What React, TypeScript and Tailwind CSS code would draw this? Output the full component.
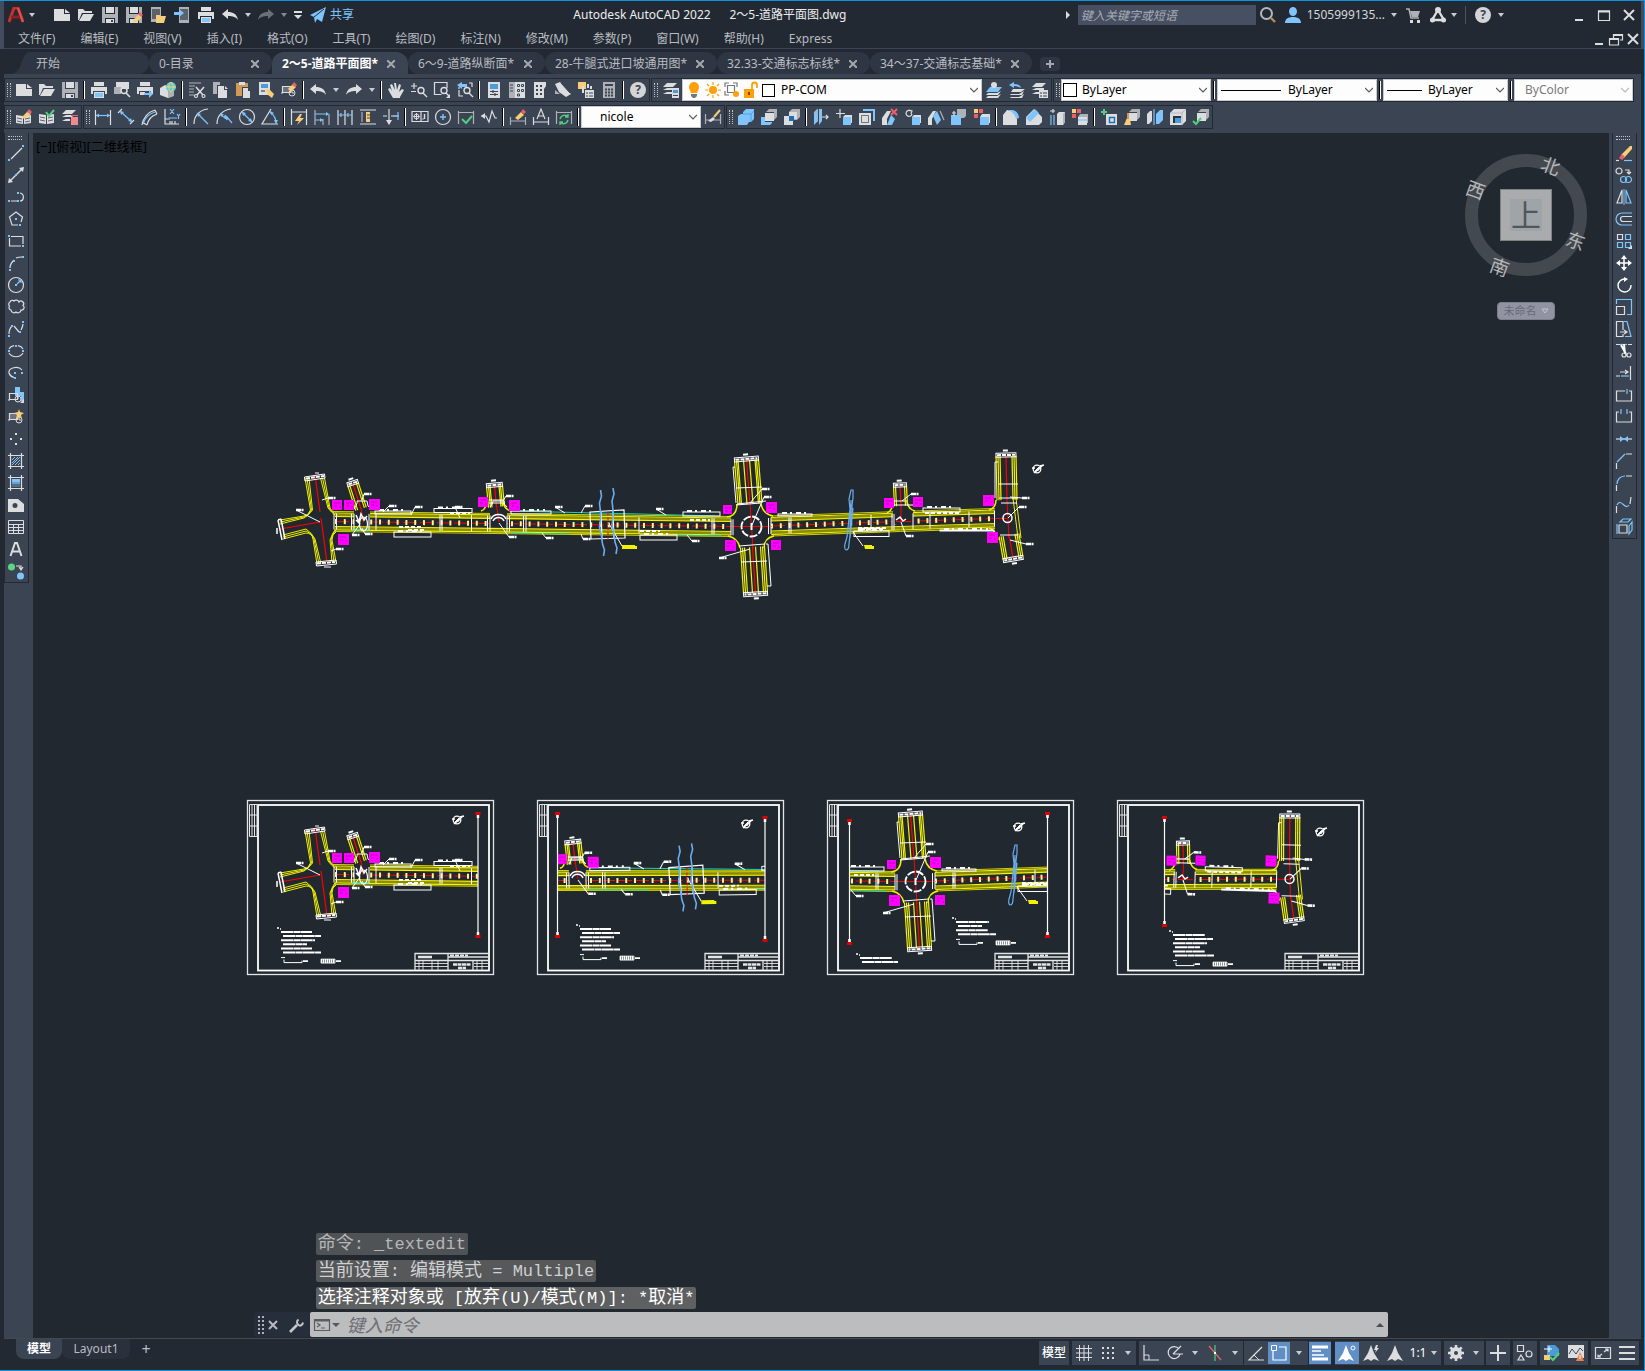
import React from 'react';

const W = '#dcdddf';
const S = '#aeb1b5';
const B = '#7fc4fb';
const Y = '#f7cd79';
const R = '#ec6066';
const G = '#4fcf80';
const D = '#3b4453';

// [kind, path, colour, stroke width]; 'f' fills the path and 's' strokes it
type Shape = [string, string, string?, number?];

const PENCIL: Shape[] = [
  ['f', 'M7 16l1-4 5-5 3 3-5 5z', Y],
  ['f', 'M12 7l2-2 3 3-2 2z', R],
];
const PRINTER: Shape[] = [
  ['f', 'M3 0h10v4H3z'],
  ['f', 'M0 5h16v7h-2V9H2v3H0z'],
];
const DISK: Shape[] = [
  ['f', 'M0 0h3v7h10V0h3v16h-3v-5H3v5H0z', S],
  ['f', 'M4 0h8v6H4zM4 12h8v4H4z'],
  ['f', 'M9 13h2v2H9z', D],
];
const CUBE: Shape[] = [
  ['f', 'M5 3l3-3h8v8l-3 3V3z', S],
  ['f', 'M4 4h9v8H4z'],
];
const BLOCK: Shape[] = [
  ['f', 'M1 4h9v7H1z', '#6b7380'],
  ['s', 'M1.5 4.5h8v6h-8zM0 11h2'],
  ['s', 'M8 11a3 3 0 1 0 6 0a3 3 0 1 0-6 0M11 11V8M11 11h2', W, 1],
];
const DIM: Shape[] = [['s', 'M.5 2v13M15.5 2v13M0 3.500h16', S]];
const ARROW_A: Shape[] = [['f', 'M8 0l3 8 5 8-5-2-3 2-3-2-5 2 5-8z']];

const shapes: Record<string, Shape[]> = {
  new: [['f', 'M0 2h10v5h6v7H0z'], ['f', 'M11 2l5 4h-5z']],
  open: [['f', 'M0 13V2h5l2 2h7v2H4L1 13z'], ['f', 'M5 7h11l-4 7H1z']],
  save: DISK,
  saveAs: [...DISK, ...PENCIL],
  openMobile: [['f', 'M1 0h10v15H1z', S], ['f', 'M2 2h8v10H2z', '#5c6269'], ['f', 'M6 8h4l1 1h5l-2 7H6z', Y]],
  saveMobile: [['f', 'M5 0h10v16H5z', S], ['f', 'M6 2h8v11H6z', '#5c6269'], ['f', 'M0 5h5V2l5 4-5 4V8H0z', B]],
  print: [...PRINTER, ['f', 'M3 10h10v6H3z'], ['f', 'M4 11h8v4H4z', B]],
  undo: [['f', 'M0 7l6-5v3c5 0 9 2 10 8-2-3-5-4-10-4v3z']],
  redo: [['f', 'M16 7l-6-5v3C5 5 1 7 0 13c2-3 5-4 10-4v3z']],
  customize: [['f', 'M4 4h8v2H4zM4 8h8l-4 4z']],
  share: [['f', 'M0 8L16 0l-4 15-5-3-2 4-1-6z', B], ['s', 'M4 10l10-8', '#222933', 1]],
  preview: [['f', 'M2 0h13v7H2z'], ['f', 'M0 5h7v7H0z', S], ['s', 'M7 8.500a3 3 0 1 0 6 0a3 3 0 1 0-6 0M12 11l4 4', W, 1.6]],
  publish: [...PRINTER, ['f', 'M3 10h5v3H3z'], ['f', 'M7 11h5V8l4 4-4 4v-3H7z', B]],
  globe: [['f', 'M0 6l5-3 8 3v8l-5 2-8-3z'], ['f', 'M8 9l6-3v8l-6 2z', S], ['f', 'M6 5a5 5 0 1 0 10 0a5 5 0 1 0-10 0', '#5ed0cc'], ['s', 'M6 5h10M11 0c-3 3-3 7 0 10M11 0c3 3 3 7 0 10', Y, 1]],
  cut: [['s', 'M0 1h12M0 4h6M0 7h5M0 10h5M0 13h5', S], ['s', 'M7 5l7 8M15 5l-7 8', W, 1.6], ['s', 'M5.500 14a1.500 1.500 0 1 0 3 0a1.500 1.500 0 1 0-3 0M13 14a1.500 1.500 0 1 0 3 0a1.500 1.500 0 1 0-3 0']],
  copy: [['f', 'M1 0h7v3H5v9H1z', S], ['f', 'M6 4h6v4h3v8H6z'], ['f', 'M13 4l3 3h-3z']],
  paste: [['f', 'M1 1h12v4H7v9H1z', '#cf9a58'], ['f', 'M4 0h6v3H4z'], ['f', 'M8 6h5v3h2v7H8z']],
  matchProp: [['f', 'M1 0h11v13H1z'], ['f', 'M3 2h7v4H3z', '#4b9bd8'], ['s', 'M3 9h4', D], ['f', 'M8 8l3-1 5 5-2 4-4-3z', Y]],
  blockEdit: [...BLOCK, ['f', 'M7 7l5-5 3 3-5 5z', Y], ['f', 'M11 3l2-3 3 3-2 2z', R]],
  pan: [['f', 'M5 16L2 11 0 7l2-1 2 3L2 3l2-1 3 6-1-7h2l1 7 2-6 2 1-2 7 3-3 2 1-4 7v1z']],
  zoom: [['s', 'M0 4h6M3 1v6M0 9.500h5'], ['s', 'M7 8.500a3 3 0 1 0 6 0a3 3 0 1 0-6 0M12 11l4 4', W, 1.4]],
  zoomWin: [['s', 'M13 6V.5H.5v12h7'], ['s', 'M7 8.500a3 3 0 1 0 6 0a3 3 0 1 0-6 0M12 11l3 3', W, 1.4], ['f', 'M12 16h4v-4z']],
  zoomPrev: [['s', 'M2 8v6h4M12 1h3v4M2 5v2'], ['f', 'M0 3l5-3v2h5v3H5v2z', B], ['s', 'M7 8.500a3 3 0 1 0 6 0a3 3 0 1 0-6 0M12 11l4 4', W, 1.4]],
  props: [['f', 'M2 0h12v16H2z'], ['f', 'M4 2h8v5H4z', '#4b9bd8'], ['s', 'M4 9.500h8M4 12.500h8M7 8v3M9 11v3', D]],
  designCenter: [['f', 'M0 0h6v16H0z', S], ['f', 'M6 0h10v16H6z'], ['s', 'M1 3h3M1 6h3M1 9h3', D], ['s', 'M8.500 2.500h2v2h-2zM12.500 2.500h2v2h-2zM8.500 7.500h2v2h-2zM12.500 7.500h2v2h-2zM8.500 12h2v2h-2z', D, 1]],
  palettes: [['f', 'M2 0h12v4l-2 3v9H2z'], ['s', 'M4 4h2M8 4h2M4 8h2M8 8h2M4 12h2M8 12h2', D, 2]],
  sheetSet: [['f', 'M0 2l5-2 11 12-5 3-7-5z'], ['s', 'M6 1l9 10', D, 1], ['f', 'M0 8l5 4H0z', S]],
  markup: [['f', 'M0 0h8v7H0z', Y], ['s', 'M5 4v7M10 2v4M13 4v3', W, 2], ['f', 'M7 8h9v8H7z'], ['s', 'M8 11h2M11 11h4M8 14h2M11 14h4', D, 1]],
  calc: [['f', 'M2 0h12v16H2z', S], ['f', 'M4 2h8v2H4z', D], ['s', 'M4 7.500h8M4 10.500h8M4 13.500h8', D, 2], ['s', 'M6.500 6v9M9.500 6v9', S, 1]],
  layers: [['f', 'M4 1h10l-4 4H0zM4 6h6v2H0zM4 10h5v2H0z'], ['f', 'M9 6h7v10H9z'], ['f', 'M10 8h5v3h-5z', '#4b9bd8'], ['s', 'M10 13.500h5', D, 1]],
  layerCurrent: [['f', 'M4 5h12l-4 5H0z', B], ['f', 'M5 3a3 3 0 1 0 6 0a3 3 0 1 0-6 0'], ['f', 'M2 11h9l4-2-3 4H0zM2 14h9l4-2-3 4H0z']],
  layerPrev: [['f', 'M4 7h12l-4 3H2zM2 12h8l5-3-2 4H1zM2 15h8l5-3-2 4H1z'], ['f', 'M0 3l5-3v2c4 0 6 1 7 4-2-1-4-2-7-2v2z', B]],
  layerStates: [['f', 'M4 1h10l-4 4H0zM4 6h8v2H0zM4 10h4v2H0z'], ['f', 'M7 8h9v8H7z'], ['s', 'M8 11h2M11 11h4M8 14h2M11 14h4', D, 1]],
  bookEdit: [['f', 'M0 6l7 1v8l-7-1zM15 6l-7 1v8l7-1z'], ['s', 'M1 9l5 1M1 12l5 1M9 10l5-1M9 13l5-1', D, .8], ['f', 'M6 8l6-6 3 3-7 5z', Y], ['f', 'M11 3l2-3 3 3-2 2z', R]],
  bookCheck: [['f', 'M0 5l7 1v9l-7-1zM15 5l-7 1v9l7-1z'], ['s', 'M1 8l5 1M1 11l5 1M9 9l5-1M9 12l5-1', D, .8], ['s', 'M7 3l3 4 5-6', G, 2]],
  layerDelete: [['f', 'M4 1h10l-4 4H0zM4 6h8l-2 2H0zM4 10h4v2H0z'], ['f', 'M9 8h7v8H9z', '#f08a90'], ['f', 'M9 6h7v1H9z', R]],
  dimLinear: [['s', 'M.5 1v15M15.500 1v15'], ['s', 'M1 6.500h14', B], ['f', 'M1 6.500l3-2v4zM15 6.500l-3-2v4z', B]],
  dimAligned: [['s', 'M0 4l4-4M12 15l4-4'], ['s', 'M2 2l12 11', B], ['f', 'M2 2l4 1-3 3zM14 13l-4-1 3-3z', B]],
  dimArc: [['s', 'M1 16C2 9 7 3 14 1M14 1l2 4M1 13l5 3'], ['s', 'M6 16C7 11 10 7 16 5', W], ['s', 'M2 15C4 8 8 5 14 3', B]],
  dimOrdinate: [['s', 'M1 0v15h14M6 15v-3M11 15v-3'], ['s', 'M5 11V9h8M6 0l4 5M10 0L6 5M13 5l1.500 2L16 5M14.500 7v3', B], ['s', 'M1 10h3M8 12v3', W]],
  dimRadius: [['s', 'M1 15C1 7 6 1 15 0'], ['s', 'M4 4l11 11', B], ['f', 'M4 4l4 1-3 3z', B]],
  dimJogged: [['s', 'M1 15C1 7 6 1 15 0'], ['s', 'M4 5l5 4 0-3 2 5V8l5 6', B], ['f', 'M4 5l4 0-3 3z', B]],
  dimDiameter: [['s', 'M.5 8a7.500 7.500 0 1 0 15 0a7.500 7.500 0 1 0-15 0'], ['s', 'M3 3l10 10', B], ['f', 'M3 3l4 1-3 3zM13 13l-4-1 3-3z', B]],
  dimAngular: [['s', 'M9 0L0 15h16'], ['s', 'M8 3c4 3 6 6 6 11', B], ['f', 'M8 2l4 2-3 2zM14 15l-2-4h4z', B]],
  quickDim: [['s', 'M.5 0v16M15.500 0v16M1 3h14'], ['f', 'M9 5L4 12h4l-2 4 7-7H9l2-4z', Y]],
  dimBaseline: [['s', 'M1 1v15M9 10v6M15 5v11', S], ['s', 'M1 5h13M1 11h8', B], ['f', 'M15 5l-3-2v4zM9 11l-3-2v4z', B]],
  dimContinue: [['s', 'M1 1v15M8 1v15M15 1v15'], ['s', 'M1 6h14M4 4v4M11 4v4', B]],
  dimSpace: [['s', 'M0 1h16M0 15h16'], ['f', 'M6 3h4v10H6z', Y], ['s', 'M2 3v10', S], ['s', 'M7 6h3M7 9h3', D, 1]],
  dimBreak: [['s', 'M6 0v15M0 7h4M8 7h8'], ['f', 'M3 11h6l-3 5z'], ['s', 'M10 7h5M15 3v8', B]],
  tolerance: [['s', 'M0 2.500h16v10H0zM9 2v10'], ['s', 'M2 7.500a2.500 2.500 0 1 0 5 0a2.500 2.500 0 1 0-5 0M4.500 4v7M1.500 7.500h6', W, 1], ['s', 'M12.500 5v5M10.500 10h1', W, 1.4]],
  centerMark: [['s', 'M.5 8a7.500 7.500 0 1 0 15 0a7.500 7.500 0 1 0-15 0'], ['s', 'M5 8h6M8 5v6', B, 1.4]],
  inspect: [...DIM, ['s', 'M4 10l4 4 6-7', G, 2]],
  jogLine: [['s', 'M0 7h5l3 6 3-11 3 7h2'], ['f', 'M0 7l4-3v6z']],
  dimEdit: [['s', 'M.5 8v8M15.500 8v8M0 12h16', S], ['f', 'M5 9l6-6 3 3-6 5z', Y], ['f', 'M11 3l2-3 3 3-2 2z', R]],
  dimTextEdit: [['s', 'M.5 8v8M15.500 8v8M0 13h16M4 10L8 0l4 10M5 7h6']],
  dimUpdate: [...DIM, ['s', 'M4 10c1-4 6-5 8-2M12 5v3h-3M12 11c-1 4-6 5-8 2M4 16v-3h3', G, 1.4]],
  dimStyle: [['s', 'M.5 5v10M15.500 5v10M0 11h16', S], ['f', 'M3 12l5-4 2 2-4 3z'], ['s', 'M9 8l6-7', Y, 2]],
  union: [['f', 'M0 7l3-2h2V3l3-3h8v10l-3 3h-2l-2 3H0z', B], ['s', 'M5 5h8l3-3M13 5v8', '#4b9bd8', .8]],
  subtract: [['f', 'M0 8h4v5h7v1l-2 2H0z', B], ...CUBE],
  intersect: [['f', 'M5 3l3-3h8v8l-3 3h-3z', S], ['f', 'M5 3h8v7H5z'], ['f', 'M0 7h9v9H0z'], ['f', 'M5 7h5v5H5z', '#1b6fb3']],
  extrudeFaces: [['f', 'M1 4l4-4v12l-4 4zM6 0h3v12l-3 4z', B], ['s', 'M1 4l3-3v12', S], ['s', 'M9 8h6M13 6l2 2-2 2']],
  moveFaces: [['s', 'M4 0v9M0 4.500h9'], ['f', 'M7 8h8v8H7z', B], ['f', 'M7 8l2-2h7v8h-1V8z']],
  offsetFaces: [['f', 'M4 0h12v12h-2V2H4z', B], ['f', 'M0 4h12v12H0z'], ['s', 'M2.500 6.500h7v7h-7z', '#6b7380', 1]],
  deleteFaces: [['f', 'M0 16V9l5-7h4L5 10v6z'], ['f', 'M5 16l4-10 4 4-3 6z', B], ['s', 'M9 0l6 6M15 0L9 6', R, 2]],
  rotateFaces: [['s', 'M6 2a3 3 0 1 0 1 3M4 1l3 1-1 3'], ['f', 'M7 8h8v8H7z', B], ['f', 'M7 8l2-2h7v8h-1V8z']],
  taperFaces: [['f', 'M0 16V9l5-7h3L4 10v6z'], ['f', 'M5 7l4-5 4 9-4 5z', B], ['s', 'M12 2l4 9', S]],
  copyFaces: [['f', 'M6 0h9v7l-2 2H6z', S], ['f', 'M0 6h10v10H0z', B], ['s', 'M1 4h4M3 2v5']],
  colorFaces: [['f', 'M0 0h4v4H0z', Y], ['f', 'M5 0h4v4H5z', R], ['f', 'M0 5h4v4H0z', R], ['f', 'M6 8h9v8H6z', B], ['f', 'M6 8l2-3h8v9h-1V8z']],
  filletEdge: [['f', 'M0 16V6l4-5 5 1c4 2 5 5 5 8v6z'], ['f', 'M5 1h5c4 1 6 5 6 8l-3 1C12 6 10 3 5 1z', B]],
  chamferEdge: [['f', 'M0 16V8l8-8 8 8v5l-3 3z'], ['f', 'M0 9l9-9 4 4-9 9z', B]],
  copyEdges: [['s', 'M1 2h5M4 0v4'], ['s', 'M2 6v10M5 6v10', B], ['f', 'M8 5l2-2h6v10l-2 3H8z'], ['f', 'M14 5l2-2v10l-2 3z', S]],
  colorEdges: [['f', 'M0 0h4v4H0z', Y], ['f', 'M5 0h4v4H5z', R], ['f', 'M0 5h4v4H0z', R], ['f', 'M6 8h9v8H6z'], ['f', 'M6 8l2-3h8v9h-1V8z', S], ['s', 'M6 11h9', B]],
  imprint: [['s', 'M0 3h6M3 0v6', G, 2], ['f', 'M5 5h11v11H5z'], ['s', 'M8.500 8.500h5v5h-5z', '#1b6fb3', 1.4]],
  clean: [...CUBE, ['f', 'M3 9l3 1 1 6H0z', Y], ['s', 'M4 4v6', '#cf9a58', 2]],
  separate: [['f', 'M0 5l3-3h2v10l-3 3H0z'], ['f', 'M9 5l4-4h3v10l-4 4H9z', B], ['s', 'M7 0v16', B]],
  shell: [['f', 'M0 4l4-4h12v12l-4 4H0z'], ['f', 'M3 7h8v7H3z', '#2b3340'], ['f', 'M5 9h6v5H5z', '#4b9bd8'], ['s', 'M0 4h12v12M12 4l4-4', S, .8]],
  check: [...CUBE, ['s', 'M0 12l3 3 5-6', G, 2]],

  line: [['s', 'M3 14L14 3'], ['f', 'M0 14h2v2H0zM14 0h2v2h-2z', B]],
  xline: [['s', 'M2 14L14 2', W, 1.4], ['f', 'M0 16l1-5 4 4zM16 0l-5 1 4 4z'], ['f', 'M7 7h2v2H7z', B]],
  pline: [['s', 'M3 12h6M12 4c5 1 4 8 0 8'], ['f', 'M0 11h2v2H0zM9 11h2v2H9zM9 3h2v2H9z', B]],
  polygon: [['s', 'M10 14H4L1.500 6 8 1l6.500 5-1.500 5'], ['f', 'M7 7h2v2H7zM11 13h2v2h-2z', B]],
  rect: [['s', 'M3 3.500h12V11M1.500 5v8H13'], ['f', 'M0 2h2v2H0zM14 12h2v2h-2z', B]],
  arc: [['s', 'M2 13c0-3 2-6 4-8M8 3c2-1 4-1 6-1'], ['f', 'M1 14h2v2H1zM5 5h2v2H5zM14 1h2v2h-2z', B]],
  circle: [['s', 'M.5 8a7.500 7.500 0 1 0 15 0a7.500 7.500 0 1 0-15 0'], ['s', 'M9 7l4-4M10 3h3v3', B], ['f', 'M7 7h2v2H7z', B]],
  revcloud: [['s', 'M1.500 7A2.500 2.500 0 0 1 2 3a2.500 2.500 0 0 1 4-1a3 3 0 0 1 5 1a2.500 2.500 0 0 1 4 3.500a2.500 2.500 0 0 1-2 4.500a3 3 0 0 1-5 2a3 3 0 0 1-5-2a2.500 2.500 0 0 1-1.500-4z']],
  spline: [['s', 'M1 13c0-3 1-6 3-8M6 5l5 6M13 9c1-2 2-4 2-6'], ['f', 'M0 14h2v2H0zM3 4h2v2H3zM11 10h2v2h-2zM14 0h2v2h-2z', B]],
  ellipse: [['s', 'M1 6c1-2 3-3 5-3.300M10 2.700c2 .3 4 1.300 5 3.300M1 10c3 5 11 5 14 0'], ['f', 'M0 7h2v2H0zM14 7h2v2h-2zM7 2h2v2H7z', B]],
  ellipseArc: [['s', 'M14 5C10 0 0 3 1 8c1 3 3 4 5 4.500'], ['f', 'M6 7h2v2H6zM13 7h2v2h-2zM6 12h2v2H6z', B]],
  insertBlock: [['f', 'M7 0h5v5h4v9h-3V9H7z', B], ['s', 'M1.500 6.500h8v6h-8zM0 13h2'], ['s', 'M7 12a3 3 0 1 0 6 0a3 3 0 1 0-6 0M10 12V9', W, 1], ['f', 'M12 16h4v-4z']],
  makeBlock: [...BLOCK, ['f', 'M11 0l1 3 4 1-3 2 1 4-3-2-3 2 1-4-3-2 4-1z', Y]],
  point: [['f', 'M7 2h2v2H7zM2 7h2v2H2zM12 7h2v2h-2zM7 12h2v2H7z']],
  hatch: [['s', 'M2.500 0v16M13.500 0v16M0 2.500h16M0 13.500h16'], ['s', 'M4 7l3-3M4 10l6-6M4 12l8-8M7 12l5-5M10 12l2-2', B, 1]],
  gradient: [['s', 'M2.500 0v16M13.500 0v16M0 2.500h16M0 13.500h16'], ['f', 'M4 4h8v3H4z', B], ['f', 'M4 7h8v2H4z', '#6a9fc8'], ['f', 'M4 9h8v3H4z', '#566f88']],
  region: [['f', 'M0 2h10l6 5v8H0zM7 6a2.500 2.500 0 1 0 0 5a2.500 2.500 0 1 0 0-5z']],
  table: [['s', 'M.5 1.500h15v13H.5zM0 5.500h16M0 8.500h16M0 11.500h16M5.500 5v9M10.500 5v9', W, 1]],
  mtext: [['s', 'M2.500 15L7 2h2l4.500 13M4 10.500h8', W, 2]],
  addSelected: [['f', 'M0 4a3.500 3.500 0 1 0 7 0a3.500 3.500 0 1 0-7 0', '#5bd687'], ['f', 'M9 13a3.500 3.500 0 1 0 7 0a3.500 3.500 0 1 0-7 0', B], ['s', 'M8 3h5v3M11 4l2 3 2-3']],

  erase: [['f', 'M5 10L14 1l2 0v3l-8 9z', Y], ['f', 'M3 13l3-4 3 3-3 3z', R], ['s', 'M0 15.500h3'], ['s', 'M8 15.500h8', B]],
  copyObj: [['s', 'M0 4a3 3 0 1 0 6 0a3 3 0 1 0-6 0M9 3h4v4M11 5l2 2 2-2'], ['s', 'M4.500 12.500a3 3 0 1 0 6 0a3 3 0 1 0-6 0M9.500 12.500a3 3 0 1 0 6 0a3 3 0 1 0-6 0', B]],
  mirror: [['s', 'M6 1v13H1z'], ['s', 'M10 1v13h5z', B], ['s', 'M8 0v16', B, 1]],
  offset: [['s', 'M16 2H6a6 6 0 0 0 0 12h10', B], ['s', 'M16 5.500H7a2.500 2.500 0 0 0 0 5h9']],
  array: [['s', 'M1.500 1.500h5v5h-5z'], ['s', 'M9.500 1.500h5v5h-5zM1.500 9.500h5v5h-5zM9.500 9.500h5v5h-5z', B], ['f', 'M12 16h4v-4z']],
  move: [['s', 'M8 2v12M2 8h12', '#fff', 1.5], ['f', 'M8 0l3 4H5zM8 16l3-4H5zM0 8l4-3v6zM16 8l-4-3v6z', '#fff']],
  rotate: [['s', 'M9 2a6.500 6.500 0 1 0 6 6', '#fff', 1.4], ['f', 'M8 0l4 2-4 3z', '#fff']],
  scale: [['s', 'M.5 5V.5h15v15H11', B], ['s', 'M.5 7.500h8v8h-8z']],
  stretch: [['s', 'M7 9V.5H.5v15H7V13M4 11h6M8 9l3 2-3 2'], ['s', 'M8 .5h3l4 15H9', B]],
  trim: [['s', 'M0 1.500h4M12 1.500h4'], ['s', 'M4 1.500h7', B], ['s', 'M5 2l5 9M8 1l1 10', '#fff', 2], ['s', 'M6 12a2 2 0 1 0 4 0a2 2 0 1 0-4 0M11 12a2 2 0 1 0 4 0a2 2 0 1 0-4 0']],
  extend: [['s', 'M14.500 1v14M0 11h4M4 7h8M9 5l3 2-3 2'], ['s', 'M5 11h8', B]],
  breakPoint: [['s', 'M9 4H.5v10h15V4H13'], ['s', 'M11 2v5', B]],
  breakObj: [['s', 'M3 3H.5v10h15V3H13'], ['s', 'M5 0v5M11 0v5', B]],
  join: [['s', 'M0 8h16'], ['f', 'M4 5l4 3-4 3zM12 5L8 8l4 3z', B]],
  chamfer: [['s', 'M10 1h6M.5 10v6'], ['s', 'M1 9l8-8', B]],
  fillet: [['s', 'M10 1h6M.5 10v6'], ['s', 'M1 9c0-4 3-8 8-8', B]],
  blend: [['s', 'M.5 9v7M15 0l-1 7'], ['s', 'M1 8c4-8 8 6 12 0', B]],
  explode: [['s', 'M3 6h8v8H3z'], ['s', 'M1 5v10M4 3l3-3h8l-3 3zM13 7l3-4v8l-3 4z', B]],

  grid: [['s', 'M3.500 0v16M8 0v16M12.500 0v16M0 3.500h16M0 8h16M0 12.500h16', W, 1]],
  snap: [['f', 'M2 2h2v2H2zM7 2h2v2H7zM12 2h2v2h-2zM2 7h2v2H2zM7 7h2v2H7zM12 7h2v2h-2zM2 12h2v2H2zM7 12h2v2H7zM12 12h2v2h-2z']],
  ortho: [['s', 'M1 0v15h15'], ['s', 'M1 10h5v5', W, 1]],
  polar: [['s', 'M12 4a6 6 0 1 0 1 5M6 9h10M6 9l8-8']],
  isoplane: [['s', 'M2 1l12 14', R], ['s', 'M8 0v16', G], ['f', 'M7 7h2v2H7z', '#fff']],
  otrack: [['s', 'M14 2L1 15h15'], ['s', 'M6 10l5 5', W, 1]],
  osnap: [['s', 'M2 6v9h13V2H8', '#fff'], ['s', 'M.5.5h5v5h-5z', '#fff', 1]],
  lineweight: [['s', 'M0 2h16M0 14h16', '#fff', 3], ['s', 'M0 6h9M0 10h12', '#fff', 1.6]],
  annoVis: [['f', 'M7 0l3 8 5 8-5-2-3 2-3-2-5 2 5-8z', '#fff'], ['s', 'M12 3a2 2 0 1 0 4 0a2 2 0 1 0-4 0', '#fff', 1]],
  annoAuto: [...ARROW_A, ['f', 'M13 0l-2 5h2l-1 3 4-5h-2l1-3z']],
  annoScale: ARROW_A,
  plus: [['s', 'M0 8h16M8 0v16', W, 2]],
  isolate: [['s', 'M.5.5h6v6h-6zM4 10l3 5H1zM9 9a3 3 0 1 0 6 0a3 3 0 1 0-6 0', W, 1.200]],
  hardware: [['f', 'M3 0h8l4 4v7H3z', '#4b9bd8'], ['s', 'M0 4h8M5 1v6', '#fff', 1], ['f', 'M0 10h6v5H0z', Y], ['s', 'M6 12l3 3 6-7', G, 2.200]],
  perf: [['f', 'M0 0h16v13H0z'], ['s', 'M1 9l3-5 4 5 4-6 3 3', D, 1], ['f', 'M12 7l4 9H8z', '#e8824a'], ['s', 'M12 10v4', '#fff', 1]],
  fullscreen: [['s', 'M.5 2.500h15v11H.5z'], ['s', 'M9 7l4-3M10 4h3v2.500M7 9l-4 3M3 9.500V12h3', W, 1.2]],
  menu: [['s', 'M0 2h16M0 8h16M0 14h16', W, 2]],
  search: [['s', 'M1 6.500a5.500 5.500 0 1 0 11 0a5.500 5.500 0 1 0-11 0', '#b5b8bb', 2], ['s', 'M11 11l4 4', '#b58b5a', 2.4]],
  user: [['f', 'M4 4.500a4 4.500 0 1 0 8 0a4 4.500 0 1 0-8 0M0 16c0-4 3-6 8-6s8 2 8 6z', B]],
  cart: [['s', 'M0 2h3l2 9h8', S, 1.6], ['f', 'M4 4h10l-2 6H6z', S], ['f', 'M4 13h3v3H4zM11 13h3v3h-3z', W]],
  autodesk: [['s', 'M8 3L2 13h12z', W, 2.4], ['f', 'M5 3a3 3 0 1 0 6 0a3 3 0 1 0-6 0M0 13a2.500 2.500 0 1 0 5 0a2.500 2.500 0 1 0-5 0M11 13a2.500 2.500 0 1 0 5 0a2.500 2.500 0 1 0-5 0']],
  minimize: [['s', 'M4 13h8', W, 2]],
  maximize: [['s', 'M2.500 4h11v9.500h-11z', W, 1.2], ['s', 'M2 4.500h12', W, 2]],
  restore: [['s', 'M5.500 7V3.500h9V9H12M1.500 8h9v6h-9z', W, 1.2], ['s', 'M1 8h10M5 4h10', W, 1.8]],
  close: [['s', 'M3 3l10 10M13 3L3 13', W, 2]],
  closePanel: [['s', 'M4 4l8 8M12 4l-8 8', '#b9bbbe', 2]],
  wrench: [['s', 'M2 15l7-7', '#c4c6c9', 2.600], ['s', 'M10.500 2.500c-2 1.500-2 4 0 5.500s4 0 4.500-2.500', '#c4c6c9', 2]],
  prompt: [['s', 'M.5 2.500h15v11H.5z', '#5a5c5f', 1.200], ['s', 'M0 3.500h16', '#5a5c5f', 2], ['s', 'M3 6l3 2-3 2M7 11h4', '#5a5c5f', 1.2]],
  gear: [['s', 'M8 0v16M0 8h16M2.300 2.300l11.400 11.400M13.700 2.300L2.300 13.700', W, 2.6], ['s', 'M3.500 8a4.500 4.500 0 1 0 9 0a4.500 4.500 0 1 0-9 0', W, 3], ['f', 'M6 8a2 2 0 1 0 4 0a2 2 0 1 0-4 0', D]],
  bulb: [['f', 'M3 5a5 5 0 1 1 10 0c0 3-2 4-2 6H5c0-2-2-3-2-6z', '#ff9f0a'], ['f', 'M5 12h6v2l-2 2H7l-2-2z', '#777']],
  sun: [['f', 'M4 8a4 4 0 1 0 8 0a4 4 0 1 0-8 0', '#ff9f0a'], ['s', 'M8 0v3M8 13v3M0 8h3M13 8h3M2 2l2 2M12 12l2 2M14 2l-2 2M4 12l-2 2', '#ff9f0a', 1.2]],
  vpFreeze: [['s', 'M1 5V1h4M9 1h4v4M1 9v4h4M3.500 3.500h7v7h-7z', '#777', 1.2], ['f', 'M9 12a3 3 0 1 0 6 0a3 3 0 1 0-6 0', '#ff9f0a']],
  lock: [['f', 'M1 7h10v9H1z', '#ff9f0a'], ['s', 'M9 7V3a2.500 2.500 0 0 1 5 0v3', '#ff9f0a', 1.800], ['f', 'M5 10h2v3H5z', '#7a4a00']],
};

const Icon = ({ name }: { name: string }) => (
  <svg className="size-4 shrink-0 overflow-visible" viewBox="0 0 16 16" aria-hidden="true">
    {shapes[name].map(([kind, d, color = W, width = 1.2], i) =>
      kind === 'f' ? (
        <path key={i} d={d} fill={color} fillRule="evenodd" />
      ) : (
        <path key={i} d={d} fill="none" stroke={color} strokeWidth={width} />
      )
    )}
  </svg>
);

const Help = () => (
  <span className="flex size-4 items-center justify-center rounded-full bg-[#d3d5d7] text-xs font-bold text-[#3b4453]">?</span>
);

const Caret = () => (
  <svg className="h-1 w-2" viewBox="0 0 8 4" aria-hidden="true">
    <path d="M1 0h6L4 4z" fill="#c9cbce" />
  </svg>
);

const Tool = ({ name, className = 'w-[23px] pl-px' }: { name: string; className?: string }) => (
  <button aria-label={name} className={`flex h-[22px] shrink-0 items-center justify-center ${className}`}>
    {name === 'help' ? <Help /> : name === 'caret' ? <Caret /> : <Icon name={name} />}
  </button>
);

const Grip = () => <span className="mr-px ml-[2px] h-[14px] w-1 shrink-0 border-x border-dotted border-[#c3c5c8]" />;

const Divider = () => <span className="mx-[2px] h-[18px] w-[2px] shrink-0 border-l border-black bg-white" />;

// '|' is a divider and 'v' is a flyout arrow
const Tools = ({ names }: { names: string }) => (
  <>
    {names.split(' ').map((name, i) =>
      name === '|' ? <Divider key={i} /> : name === 'v' ? <Tool key={i} name="caret" className="w-[13px]" /> : <Tool key={i} name={name} />
    )}
  </>
);

const Bar = ({ children, className = '' }: { children: React.ReactNode; className?: string }) => (
  <div role="toolbar" className={`flex h-6 items-center border border-[#222933] ${className}`}>
    <Grip />
    {children}
  </div>
);

type PickerProps = {
  label: string;
  value: string;
  className: string;
  pad: string;
  disabled?: boolean;
  children?: React.ReactNode;
};

const Picker = ({ label, value, className, pad, disabled, children }: PickerProps) => (
  <div className={`relative h-[22px] shrink-0 ${className}`}>
    <select
      aria-label={label}
      disabled={disabled}
      className={`block size-full appearance-none border border-[#c8cacc] bg-[#fdfdfd] text-xs text-black disabled:text-[#7a7a7a] ${pad}`}
    >
      <option>{value}</option>
    </select>
    <div className="pointer-events-none absolute inset-y-0 left-1 flex items-center gap-[3px]">{children}</div>
    <svg className="pointer-events-none absolute top-2 right-1 h-[6px] w-2" viewBox="0 0 8 6" aria-hidden="true">
      <path d="M0 1l4 4 4-4" fill="none" stroke={disabled ? '#b8b8b8' : '#5a5a5a'} strokeWidth="1.2" />
    </svg>
  </div>
);

const TitleBar = () => (
  <div className="flex h-7 items-center pl-1">
    <svg className="size-4" viewBox="0 0 16 16" aria-hidden="true">
      <path d="M1 15L6 1h4l5 14" fill="none" stroke="#c8312f" strokeWidth="3" />
      <path d="M3 10h9" stroke="#8f1f22" strokeWidth="3" />
      <path d="M10 1l5 14" stroke="#e2504a" strokeWidth="2" />
    </svg>
    <Tool name="caret" className="w-4" />
    <div className="ml-[10px] flex items-center">
      {['new', 'open', 'save', 'saveAs', 'openMobile', 'saveMobile', 'print', 'undo'].map((name) => (
        <Tool key={name} name={name} className="w-6" />
      ))}
      <Tool name="caret" className="w-3" />
      <Tool name="redo" className="w-6 opacity-40" />
      <Tool name="caret" className="w-3 opacity-60" />
      <Tool name="customize" className="w-4" />
    </div>
    <button className="ml-1 flex items-center gap-1 text-xs text-[#7fc4fb]">
      <Icon name="share" />
      共享
    </button>
    <h1 className="min-w-0 flex-1 truncate text-center text-xs whitespace-pre text-[#eceded]">
      {'Autodesk AutoCAD 2022      2～5-道路平面图.dwg'}
    </h1>
    <svg className="mr-2 h-2 w-1" viewBox="0 0 4 8" aria-hidden="true">
      <path d="M0 0l4 4-4 4z" fill={W} />
    </svg>
    <input
      aria-label="搜索"
      placeholder="键入关键字或短语"
      className="h-5 w-[178px] bg-[#474f63] px-[3px] text-xs italic placeholder:text-[#a9adb5]"
    />
    <Tool name="search" className="w-[25px]" />
    <Tool name="user" className="w-6" />
    <button className="ml-[2px] flex items-center gap-[5px] text-xs text-[#d5d7da]">
      1505999135...
      <Caret />
    </button>
    <Tool name="cart" className="ml-1 w-6" />
    <Tool name="autodesk" className="w-6" />
    <Tool name="caret" className="w-2" />
    <span className="mx-[7px] h-[18px] w-px bg-[#4a5366]" />
    <Tool name="help" className="w-5" />
    <Tool name="caret" className="w-4" />
    <div className="ml-[62px] flex items-center gap-[9px] pr-1">
      <Tool name="minimize" className="w-4" />
      <Tool name="maximize" className="w-4" />
      <Tool name="close" className="w-4" />
    </div>
  </div>
);

const menus = [
  '文件(F)', '编辑(E)', '视图(V)', '插入(I)', '格式(O)', '工具(T)', '绘图(D)',
  '标注(N)', '修改(M)', '参数(P)', '窗口(W)', '帮助(H)', 'Express',
];

const MenuBar = () => (
  <nav className="flex h-5 items-center border-b border-[#3b4453] pl-[2px]">
    <div className="flex gap-px">
      {menus.map((menu) => (
        <button key={menu} className="px-3 text-xs text-[#b9bcc1]">
          {menu}
        </button>
      ))}
    </div>
    <div className="ml-auto flex items-center gap-px">
      <Tool name="minimize" className="w-4" />
      <Tool name="restore" className="w-4" />
      <Tool name="close" className="w-4" />
    </div>
  </nav>
);

const tabs = [
  { title: '0-目录', width: 'w-[123px]' },
  { title: '2～5-道路平面图*', width: 'w-[136px]', active: true },
  { title: '6～9-道路纵断面*', width: 'w-[137px]' },
  { title: '28-牛腿式进口坡通用图*', width: 'w-[172px]' },
  { title: '32.33-交通标志标线*', width: 'w-[153px]' },
  { title: '34～37-交通标志基础*', width: 'w-[162px]' },
];

const FileTabs = () => (
  <div className="flex h-[25px] items-end pl-[6px]">
    <svg className="h-[22px] w-5" viewBox="0 0 20 22" aria-hidden="true">
      <path d="M0 22C14 22 10 0 20 0v22z" fill="#2f3643" />
    </svg>
    <button className="h-[22px] w-[119px] rounded-r-xl bg-[#2f3643] pt-[2px] pl-[6px] text-left text-xs text-[#b9bcc1]">开始</button>
    {tabs.map((tab) => (
      <div
        key={tab.title}
        className={`flex h-[22px] shrink-0 items-center justify-between rounded-xl pt-[2px] pr-[9px] pl-[10px] text-xs ${tab.width} ${
          tab.active ? 'rounded-b-none bg-[#3b4453] font-bold text-white' : 'bg-[#2f3643] text-[#b9bcc1]'
        }`}
      >
        <button className="whitespace-nowrap">{tab.title}</button>
        <button aria-label="关闭" className="flex w-4 justify-center">
          <svg className="size-2" viewBox="0 0 8 8" aria-hidden="true">
            <path d="M0 0l8 8M8 0L0 8" stroke="#a4a8ae" strokeWidth="2" />
          </svg>
        </button>
      </div>
    ))}
    <button aria-label="新建图形" className="mb-[3px] ml-2 flex h-[14px] w-5 items-center justify-center rounded bg-[#2f3643]">
      <svg className="size-2" viewBox="0 0 8 8" aria-hidden="true">
        <path d="M0 4h8M4 0v8" stroke="#a4a8ae" strokeWidth="2" />
      </svg>
    </button>
  </div>
);

const Toolbars = () => (
  <div className="space-y-[3px] bg-[#3b4453] py-1">
    <div className="flex gap-px">
      <Bar>
        <Tools names="new open save | print preview publish globe | cut copy paste matchProp blockEdit | undo v redo v | pan zoom zoomWin zoomPrev | props designCenter palettes sheetSet markup calc | help" />
      </Bar>
      <Bar>
        <Tool name="layers" />
        <Picker label="图层" value="PP-COM" className="w-[300px]" pad="pl-[98px]">
          <Icon name="bulb" />
          <Icon name="sun" />
          <Icon name="vpFreeze" />
          <Icon name="lock" />
          <span className="size-[13px] border border-black bg-white" />
        </Picker>
        <Tools names="layerCurrent layerPrev layerStates" />
      </Bar>
      <Bar>
        <Picker label="颜色" value="ByLayer" className="w-[150px]" pad="pl-5">
          <span className="-ml-[2px] size-[14px] border border-black bg-white" />
        </Picker>
        <Divider />
        <Picker label="线型" value="ByLayer" className="w-[160px]" pad="pl-[70px]">
          <span className="h-px w-[60px] bg-black" />
        </Picker>
        <Divider />
        <Picker label="线宽" value="ByLayer" className="w-[125px]" pad="pl-11">
          <span className="h-px w-[35px] bg-black" />
        </Picker>
        <Divider />
        <Picker label="打印样式" value="ByColor" className="w-[119px]" pad="pl-[10px]" disabled />
      </Bar>
    </div>
    <div className="flex gap-px">
      <Bar>
        <Tools names="bookEdit bookCheck layerDelete" />
      </Bar>
      <Bar>
        <Tools names="dimLinear dimAligned dimArc dimOrdinate | dimRadius dimJogged dimDiameter dimAngular | quickDim dimBaseline dimContinue dimSpace dimBreak | tolerance centerMark inspect jogLine | dimEdit dimTextEdit dimUpdate |" />
        <Picker label="标注样式" value="nicole" className="w-[120px]" pad="pl-[18px]" />
        <Tool name="dimStyle" />
      </Bar>
      <Bar>
        <Tools names="union subtract intersect | extrudeFaces moveFaces offsetFaces deleteFaces rotateFaces taperFaces copyFaces colorFaces | filletEdge chamferEdge copyEdges colorEdges | imprint clean separate shell check" />
      </Bar>
    </div>
  </div>
);

const SideBar = ({ names }: { names: string }) => (
  <div role="toolbar" className="flex w-[25px] flex-col border border-t-0 border-[#222933] pt-[3px]">
    <span className="mb-[2px] ml-[3px] h-1 w-[14px] border-y border-dotted border-[#c3c5c8]" />
    {names.split(' ').map((name) => (
      <Tool key={name} name={name} className="w-[22px]" />
    ))}
  </div>
);

type BandProps = { from: number[]; to: number[]; offsets: number[]; color: string; width?: number; dash?: string };

const Band = ({ from, to, offsets, color, width = 1, dash }: BandProps) => {
  const dx = to[0] - from[0];
  const dy = to[1] - from[1];
  const len = Math.hypot(dx, dy);
  return (
    <g stroke={color} strokeWidth={width} strokeDasharray={dash}>
      {offsets.map((o) => {
        const ox = (-dy / len) * o;
        const oy = (dx / len) * o;
        return <line key={o} x1={from[0] + ox} y1={from[1] + oy} x2={to[0] + ox} y2={to[1] + oy} />;
      })}
    </g>
  );
};

const mirror = (list: number[]) => [...list, ...list.map((n) => -n)];

const Road = ({ from, to }: { from: number[]; to: number[] }) => (
  <g>
    <Band from={from} to={to} offsets={[-6.5, 7]} color="#8b8b06" width={3} />
    <Band from={from} to={to} offsets={mirror([5, 8.5])} color="#f6f600" width={1.2} />
    <Band from={from} to={to} offsets={[-10, 10]} color="#d0d000" />
    <Band from={from} to={to} offsets={[0]} color="#f00" dash="14 3" />
    <Band from={from} to={to} offsets={[0]} color="#fffb90" width={5} dash="2 6.8" />
  </g>
);

// from is the outer end of the arm, where the width marks are
const Arm = ({ from, to, lines }: { from: number[]; to: number[]; lines: number[] }) => {
  const angle = (Math.atan2(to[1] - from[1], to[0] - from[0]) * 180) / Math.PI - 90;
  const half = lines[0];
  return (
    <g>
      <Band from={from} to={to} offsets={mirror(lines)} color="#f4f400" width={1.2} />
      <Band from={from} to={to} offsets={[0]} color="#f00" width={1.2} />
      <g transform={`translate(${from[0]} ${from[1]}) rotate(${angle})`} stroke="#fff" fill="none">
        <rect x={-half} y="-3" width={half * 2} height="4" />
        <path d={`M${-half + 1} -1H${half - 1}`} strokeWidth="2" strokeDasharray="4 1" />
        <path d="M-3 -5.500h5" strokeWidth="2" />
      </g>
    </g>
  );
};

const crossings = [
  334, 336.500, 351.500, 354, 369, 376, 440, 442, 471.500, 487.500, 490, 507, 509.500, 523.500, 526, 639, 712, 714,
  731, 733, 768.500, 771, 789, 791, 871, 892, 894, 913, 930, 969, 994.500,
];

const boxes = [
  [394, 532, 37, 5], [434, 508.5, 38, 4], [640, 535, 37, 5], [683, 512, 37, 4], [778, 514, 34, 2],
  [854, 531, 35, 5.5], [923, 508, 37, 4], [940, 530, 54, 1], [375, 511, 36, 3], [511, 511, 40, 3],
];

const squares = [
  [332, 500, 10], [344, 500, 10], [369, 499, 11], [338, 534, 11], [478, 497, 10], [509, 500, 11],
  [723, 505, 9], [766, 502, 11], [725, 540, 11], [771, 540, 10], [884, 498, 10], [913, 497, 10],
  [983, 495, 11], [987, 532, 11],
];

// label x, y, then the point that its leader starts from
const labels = [
  [296, 510, 320, 522], [328, 498, 322, 500], [336, 549, 331, 551], [364, 494, 362, 500], [389, 506, 383, 512],
  [415, 507, 411, 515], [365, 534, 362, 528], [352, 535, 360, 524], [506, 496, 503, 501], [509, 537, 499, 523],
  [546, 538, 542, 533], [555, 507, 565, 513], [585, 506, 581, 513], [583, 539, 581, 534], [656, 509, 666, 515],
  [692, 541, 687, 535], [762, 489, 750, 503], [764, 497, 752, 525], [719, 558, 750, 549], [911, 494, 902, 501],
  [906, 536, 901, 522], [1022, 498, 1010, 497], [1019, 507, 1008, 518], [1026, 544, 1010, 540], [455, 507, 460, 518],
];

const river = 'l1 6-2 7 1 9 0 8-1 7 2 9 1 8 2 6-1 6';

const Plan = () => (
  <g fill="none">
    <g stroke="#f0f000">
      {[0, 2, 4].map((o) => (
        <g key={o}>
          <path d={`M${324.5 - o} 478L${330 - o / 2} 508Q331 512 336 ${512 + o}`} />
          <path d={`M${305 + o} 478L${310.500 + o / 2} 510Q308 516 304 ${516 + o / 2}L280 ${520 + o}`} />
          <path d={`M283 ${539 - o}L306 ${533 - o}Q312 533 ${313 + o / 2} 539L${317 + o} 564`} />
          <path d={`M336 ${532 - o}Q332 534 ${332 - o / 2} 540L${336 - o} 562`} />
        </g>
      ))}
    </g>
    <path d="M315 475l5 37M321 518l6 45M320 522l-40 7" stroke="#f00" strokeWidth="1.200" />
    <g stroke="#fff" strokeWidth="1">
      <path d="M304.500 477l20-3 .5 4-20 3zM315 473h4M316 562l20-2 .5 4-20 2zM324 567h7" />
      <path d="M278 520l4 20M281 519l4 20M278 520l3-1M277 528v6" strokeWidth="1.5" />
      <path d="M306 478.500l18-2.500M317 563.500l18-1.500" strokeWidth="2" strokeDasharray="4 1" />
    </g>

    <Road from={[335, 521.5]} to={[731, 526.500]} />
    <Road from={[771, 526]} to={[900, 521.5]} />
    <Road from={[900, 521.5]} to={[995, 518.500]} />
    <path d="M510 511l130 3M510 533l60 1M640 514l75 2M677 535l45 1" stroke="#1fd0b0" strokeWidth="1.100" />
    <path d="M352 530h18" stroke="#0ff" />

    <g fill="#212830">
      <path d="M354 508h16v18h-16zM490 507h17v20h-17zM732 505h38v42h-38zM893 504h20v20h-20zM995 498h19v38h-19z" />
    </g>
    <Arm from={[353, 484]} to={[361, 509]} lines={[5.500, 3.500]} />
    <Arm from={[494.500, 486]} to={[496.500, 507]} lines={[8, 6, 4.500]} />
    <Arm from={[746.5, 460]} to={[750, 504]} lines={[12, 10, 8.500, 3]} />
    <Arm from={[755.5, 593]} to={[752.500, 547]} lines={[12, 10, 8, 3]} />
    <Arm from={[900, 486]} to={[901, 506]} lines={[6.500, 4.500]} />
    <Arm from={[1006, 456]} to={[1007, 500]} lines={[10, 8, 6]} />
    <Arm from={[1013, 558]} to={[1009, 535]} lines={[10, 8, 6]} />
    <path d="M361 508l2 14M496.500 505l2.500 17M750 503l3 46M732 526.500h40M901 505v17M1007 500l2 38M995 518.500h12M896 521.500h15" stroke="#f00" />

    <g stroke="#f0f000" strokeWidth="1.500">
      <path d="M737 504q0 12-10 13M761 504q2 10 12 12M740 548q-2-10-12-12M764 548q0-10 10-12" />
      <path d="M486 502q0 8-5 9M503 502q2 8 8 9M893 502q0 8-6 11M907 502q2 8 8 9M996 500q0 8-7 10M998 540q-2-10-9-12" />
      <path d="M1016 498l5 40M1013 498l5 40" strokeWidth="1" />
    </g>

    <g stroke="#fff" strokeWidth="1">
      {crossings.map((x) => {
        const mid = x < 731 ? 521.500 + (x - 335) / 80 : 526 - (x - 771) / 30;
        return <line key={x} x1={x} x2={x} y1={mid - 8} y2={mid + 8} />;
      })}
      {boxes.map(([x, y, w, h]) => (
        <g key={`${x}-${y}`}>
          <rect x={x} y={y} width={w} height={h} />
          <path d={`M${x + 4} ${y - 1}h${w - 10}`} strokeWidth="2" strokeDasharray="5 3 2 4" />
        </g>
      ))}
      <path d="M590 512l34-2 1 28-34 1zM601 511l1 28M613 511l1 28" strokeWidth="1.200" />
      <path d="M354 509q4-6 3-8h10q0 6 4 8M490 507q3-3 3-6h11q0 4 3 6M736 505l25-2M739 546l26-2M737 504l29-3M893 505h20M736 488l26-1M741 562l26-1" />
      <path d="M733 467l3 36M733 467h2M766 544h2l3 42h-4M995 462v36M995 462h3M999 484h19M999 498h19M1001 503h16M1000 535h18" />
      <path d="M489 503h15M489 500h15M893 501h14" strokeWidth="1.200" />
      <circle cx="751.500" cy="526.500" r="10" strokeWidth="1.800" strokeDasharray="8 1.500" />
      <path d="M751.500 523v7" strokeWidth="2" />
      <circle cx="1007.500" cy="518" r="4.500" strokeWidth="1.500" />
      <path d="M491 519a8 7 0 0 1 15 0M493 521a6 6 0 0 1 11 0M896 520l4-3 3 4 3-2M356 515l3 7 2-8 3 6 3-4M356 520l4 4" strokeWidth="1.500" />
      <ellipse cx="363.500" cy="524" rx="4" ry="7" strokeWidth="1.200" />
      <path d="M399 527h24M408 530h16M640 531h20M858 528h28M861 529h24M925 513h34M450 513h20M690 520h20" strokeWidth="1.800" strokeDasharray="4 2" />
      {labels.map(([x, y, lx, ly]) => (
        <g key={`${x}-${y}`}>
          <path d={`M${lx} ${ly}L${x} ${y}`} />
          <path d={`M${x} ${y}h8`} strokeWidth="2.600" strokeDasharray="5 .5 2 .5" />
        </g>
      ))}
      <path d="M608 522l14 24M853 532l10 14" />
    </g>
    <path d="M608 512v28" stroke="#f00" strokeDasharray="3 2" />
    <path d="M622 545h13v1h2v3h-15zM864 545h8v1h2v3h-9z" fill="#f2f200" />
    {squares.map(([x, y, size]) => (
      <g key={`${x}-${y}`}>
        <rect x={x} y={y} width={size} height={size} fill="#f0f" />
        <path d={`M${x + 2} ${y + 3}h6M${x + 2} ${y + 6}h3M${x + 7} ${y + 7}h2`} stroke="#a800a8" strokeWidth="0.8" />
      </g>
    ))}
    <g stroke="#6aaef0" strokeWidth="1.600">
      <path d={`M600.500 490${river}`} />
      <path d={`M613 488${river}`} />
      <path d="M851 490h2l0 8-1 8 0 10-2 10 0 9-1 9q0 6-3 6-2-1-1-6l2-7 1-9 1-10 1-9-1-10zM851 500l-1 26 3-18-3 30" strokeWidth="1.200" />
    </g>
  </g>
);

const Compass = ({ x, y }: { x: number; y: number }) => (
  <g transform={`translate(${x} ${y})`} fill="none" stroke="#fff">
    <circle r="3.800" strokeWidth="1.300" />
    <path d="M-3 4L6 -4M-5 -1h3M3 -3l4 -1" strokeWidth="1.600" />
    <path d="M-2 2l4-4v3z" fill="#fff" />
  </g>
);

const Notes = ({ x, y, rows, scale = true }: { x: number; y: number; rows: number[]; scale?: boolean }) => (
  <g fill="none" stroke="#fff">
    <path d={`M${x - 4} ${y - 4}h2M${x - 1} ${y - 3}h1`} strokeWidth="1.500" />
    {rows.map((w, i) => (
      <path key={i} d={`M${x + (i % 2 ? 2 : 0)} ${y + i * 4.1}h${w}`} strokeWidth="2" strokeDasharray="12 .4 7 .3" />
    ))}
    {scale && (
      <g transform={`translate(${x} ${y + rows.length * 4.1})`}>
        <path d="M0 1h4M3 3v3h18v-2" />
        <path d="M22 4.500h5M55 4.500h5" strokeWidth="1.800" />
        <path d="M40 2.500h14v4H40z" fill="#8d9196" strokeWidth="0.800" />
        <path d="M40 4.500h14" strokeDasharray="1 1" strokeWidth="4" />
      </g>
    )}
  </g>
);

const sheets = [
  {
    move: 'translate(0 352)', clip: [258, 220], marks: [[478, 812, 936]], compass: [457, 819],
    notes: [{ x: 281, y: 931, rows: [31, 38, 34, 24, 31, 38] }],
  },
  {
    move: 'translate(79 356) rotate(-0.8 495 522)', clip: [557.5, 207.5], marks: [[557.5, 812, 936], [765, 816, 940]], compass: [746, 823],
    notes: [{ x: 580, y: 928, rows: [31, 38, 34, 24, 31, 38] }],
  },
  {
    move: 'translate(164 354)', clip: [849.5, 198], marks: [[849.5, 819, 943], [1047.500, 812, 936]], compass: [1018, 826],
    notes: [{ x: 956, y: 921, rows: [33, 24, 32, 38] }, { x: 860, y: 957, rows: [32, 36], scale: false }],
  },
  {
    move: 'translate(282 357) rotate(1.6 900 521)', clip: [1164.5, 190], marks: [[1164.5, 816, 925]], compass: [1320, 831],
    notes: [{ x: 1173, y: 934, rows: [32, 38, 34, 25, 32, 39] }],
  },
];

const Drawing = () => (
  <svg className="absolute inset-0 size-full" aria-label="道路平面图">
    <g transform="translate(-33 -133)">
      <Plan />
      <Compass x={1037} y={469} />
    </g>
    <g transform="translate(-33 -132)">
      {sheets.map((sheet, i) => (
        <g key={i}>
          <g transform={`translate(${i * 290} 0)`} fill="none" stroke="#e4e5e6">
            <rect x="247.500" y="799.500" width="246" height="174" strokeWidth="1.300" />
            <rect x="258" y="804" width="231" height="165.500" stroke="#fff" strokeWidth="1.800" />
            <path d="M249.500 803.500h7.500v32h-7.500zM252 804v31M254.500 804v31M249 814h8M249 825h8" />
            <path d="M415 969v-16.500h73M415 959.500h73M448 953v16M473 959v10M448 956h40" strokeWidth="1.300" />
            <path d="M418 956h14" strokeWidth="2.500" />
            <path d="M450 954.500h18" strokeWidth="1.800" strokeDasharray="4 1" />
            <path d="M415 962.500h33M415 965.500h33M474 962.500h14M474 965.500h14M419 960v9M423 960v9M432 960v9M438 960v9M477 960v9M482 960v9" strokeWidth="0.900" />
            <path d="M453 963.500h18M458 967h8" strokeWidth="2.400" strokeDasharray="4 .5" />
          </g>
          <clipPath id={`sheet-${i}`}>
            <rect x={sheet.clip[0]} y="806" width={sheet.clip[1]} height="160" />
          </clipPath>
          <g clipPath={`url(#sheet-${i})`}>
            <g transform={sheet.move}>
              <Plan />
            </g>
          </g>
          {sheet.marks.map(([x, top, bottom]) => (
            <g key={x}>
              <path d={`M${x} ${top}V${bottom}`} stroke="#fff" strokeWidth="1.200" />
              <path d={`M${x - 2.5} ${top - 1}h5v3h-5zM${x - 2.5} ${bottom - 2}h5v3h-5z`} fill="#e00000" />
              <path d={`M${x} ${top + 2}v3M${x} ${bottom - 5}v3`} stroke="#fff" strokeWidth="2.500" />
            </g>
          ))}
          <Compass x={sheet.compass[0]} y={sheet.compass[1]} />
          {sheet.notes.map((note) => (
            <Notes key={note.x} {...note} />
          ))}
        </g>
      ))}
    </g>
  </svg>
);

const directions = [
  { text: '北', place: 'translate(93 31) rotate(20)' },
  { text: '西', place: 'translate(18 55) rotate(20)' },
  { text: '东', place: 'translate(118 106) rotate(20)' },
  { text: '南', place: 'translate(42 132) rotate(20)' },
];

const ViewCube = () => (
  <div className="absolute top-5 right-2 flex w-[150px] flex-col items-center">
    <svg className="h-[149px] w-[150px]" viewBox="0 0 150 149">
      <circle cx="75" cy="62" r="54.500" fill="none" stroke="#43494f" strokeWidth="13" />
      <rect x="49.500" y="36.500" width="51" height="51" fill="#a9abad" stroke="#7e8184" />
      <rect x="59" y="46" width="32" height="32" fill="#9fa4a8" />
      <text x="75" y="73" textAnchor="middle" fontSize="30" fill="#50565c">
        上
      </text>
      {directions.map((dir) => (
        <text
          key={dir.text}
          transform={dir.place}
          y="-12"
          textAnchor="middle"
          fontSize="19"
          fill="#b4b6b8"
        >
          {dir.text}
        </text>
      ))}
    </svg>
    <button className="flex h-[18px] w-[58px] items-center justify-center gap-1 rounded border border-[#7d7f8d] bg-[#9193a2] text-[11px] text-[#686b78]">
      未命名
      <svg className="h-[6px] w-2" viewBox="0 0 8 6" aria-hidden="true">
        <path d="M1 1h6L4 5z" fill="none" stroke="#c3c5cd" />
      </svg>
    </button>
  </div>
);

const history = [
  { text: '命令: _textedit', style: 'bg-[#505356] text-[#b5b7b9]' },
  { text: '当前设置: 编辑模式 = Multiple', style: 'bg-[#56585a] text-[#d0d1d2]' },
  { text: '选择注释对象或 [放弃(U)/模式(M)]: *取消*', style: 'bg-[#5e6061] text-white' },
];

const CommandLine = () => (
  <div className="relative mb-px flex w-[72%] flex-col">
    <div className="mb-[3px] ml-[62px] flex flex-col items-start gap-[5px]">
      {history.map((line) => (
        <p
          key={line.text}
          className={`h-[22px] rounded-xs px-[2px] font-['Liberation_Mono','Noto_Sans_CJK_SC',monospace] text-[17px] leading-[22px] whitespace-pre ${line.style}`}
        >
          {line.text.split(/([\u4e00-\u9fff]+)/).map((part, i) => (
            <span key={i} className={i % 2 ? 'text-lg leading-[22px]' : ''}>
              {part}
            </span>
          ))}
        </p>
      ))}
    </div>
    <div className="flex h-[25px]">
      <div className="flex w-14 items-center rounded-l bg-[#272e3b]">
        <span className="ml-1 h-[18px] w-[6px] border-x-2 border-dotted border-[#aeb1b5]" />
        <Tool name="closePanel" className="ml-px w-4" />
        <Tool name="wrench" className="ml-[7px] w-4" />
      </div>
      <label className="flex flex-1 items-center rounded-xs bg-[#bcbdbf] px-1">
        <Icon name="prompt" />
        <svg className="mr-[7px] ml-[2px] h-1 w-2" viewBox="0 0 8 4" aria-hidden="true">
          <path d="M0 0h8L4 4z" fill="#55575a" />
        </svg>
        <input
          aria-label="命令"
          placeholder="键入命令"
          className="min-w-0 flex-1 bg-transparent text-lg leading-6 italic outline-none placeholder:text-[#6d6f72]"
        />
        <svg className="h-1 w-2" viewBox="0 0 8 4" aria-hidden="true">
          <path d="M0 4h8L4 0z" fill="#4b4d50" />
        </svg>
      </label>
    </div>
  </div>
);

const Group = ({ children, className = 'mr-[3px]' }: { children: React.ReactNode; className?: string }) => (
  <div className={`flex h-6 items-center bg-[#3b4453] ${className}`}>{children}</div>
);

const StatusBar = () => (
  <footer className="flex h-8 items-start border-t border-[#45494e] pr-[2px] pl-3">
    <button className="h-5 w-[46px] rounded-b-lg bg-[#3b4453] text-xs font-bold text-white">模型</button>
    <button className="h-5 w-[68px] rounded-b-lg bg-[#2a313d] text-xs text-[#b9bcc1]">Layout1</button>
    <button aria-label="新建布局" className="flex h-5 w-8 items-center justify-center text-[#b9bcc1]">
      +
    </button>
    <div className="mt-[2px] ml-auto flex items-center">
      <Group>
        <button className="w-[30px] text-xs font-medium text-white">模型</button>
      </Group>
      <Group>
        <Tool name="grid" className="w-6" />
        <Tool name="snap" className="w-6" />
        <Tool name="caret" className="w-4" />
      </Group>
      <Group className="mr-px">
        <Tool name="ortho" className="w-6" />
        <Tool name="polar" className="w-6" />
        <Tool name="caret" className="w-4" />
        <Tool name="isoplane" className="w-6" />
        <Tool name="caret" className="w-4" />
      </Group>
      <Group className="mr-px">
        <Tool name="otrack" className="w-6" />
        <Tool name="osnap" className="w-[22px] bg-[#5f8fc4]" />
        <Tool name="caret" className="w-[18px]" />
      </Group>
      <Group className="mr-1">
        <Tool name="lineweight" className="w-[22px] bg-[#5f8fc4]" />
      </Group>
      <Group>
        <Tool name="annoVis" className="w-6 bg-[#5f8fc4]" />
        <Tool name="annoAuto" className="w-6" />
        <Tool name="annoScale" className="w-6" />
        <button className="flex h-[22px] w-[34px] items-center justify-center gap-1 text-xs text-white">
          1:1
          <Caret />
        </button>
      </Group>
      <Group className="mr-[2px]">
        <Tool name="gear" className="w-6" />
        <Tool name="caret" className="w-4" />
      </Group>
      <Group>
        <Tool name="plus" className="w-6" />
      </Group>
      <Group>
        <Tool name="isolate" className="w-6" />
      </Group>
      <Group>
        <Tool name="hardware" className="w-6" />
        <Tool name="perf" className="w-6" />
      </Group>
      <Group className="">
        <Tool name="fullscreen" className="w-6" />
        <Tool name="menu" className="w-6" />
      </Group>
    </div>
  </footer>
);

const App = () => {
  return (
    <div className="flex h-screen flex-col overflow-hidden border border-l-0 border-[#0c96dc] bg-[#222933] font-['Noto_Sans','Noto_Sans_CJK_SC',sans-serif]">
      <header className="border-r-3 border-l-4 border-[#434c5e]">
        <TitleBar />
        <MenuBar />
      </header>
      <div className="mr-[3px] ml-1 flex min-h-0 flex-1 flex-col">
        <FileTabs />
        <Toolbars />
        <main className="flex min-h-0 flex-1 items-start bg-[#3b4453]">
          <div className="mr-1">
            <SideBar names="line xline pline polygon rect arc circle revcloud spline ellipse ellipseArc insertBlock makeBlock point hatch gradient region table mtext addSelected" />
          </div>
          <section className="relative flex min-w-0 flex-1 flex-col items-center justify-end self-stretch bg-[#212830]">
            <Drawing />
            <p className="absolute top-1 left-[3px] text-[13px] text-black">[−][俯视][二维线框]</p>
            <ViewCube />
            <CommandLine />
          </section>
          <div className="mr-1 ml-[3px]">
            <SideBar names="erase copyObj mirror offset array move rotate scale stretch trim extend breakPoint breakObj join chamfer fillet blend explode" />
          </div>
        </main>
        <StatusBar />
      </div>
    </div>
  );
};

export default App;
